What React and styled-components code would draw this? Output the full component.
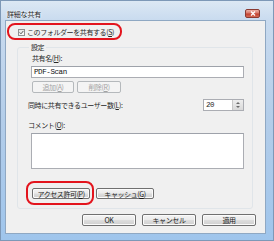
import React from "react";
import styled, { createGlobalStyle, css } from "styled-components";

const GlobalStyle = createGlobalStyle`
  html, body {
    margin: 0;
    padding: 0;
    background: #ffffff;
  }
  body {
    font-family: "Noto Sans CJK JP", "Noto Sans", sans-serif;
    font-size: 7px;
    letter-spacing: -0.4px;
    color: #262626;
  }
  * {
    box-sizing: border-box;
  }
`;

const Window = styled.div`
  width: 274px;
  height: 241px;
  display: flex;
  flex-direction: column;
  border: 1px solid #7d98b7;
  background: linear-gradient(180deg, #dce8f4 0%, #c9dbef 8%, #b3cde9 50%, #9fc5ec 100%);
`;

const TitleBar = styled.div`
  height: 19px;
  flex: none;
  display: flex;
  align-items: flex-end;
  justify-content: space-between;
  padding: 0 13px 2px 6px;
`;

const Title = styled.span`
  line-height: 8px;
  font-size: 7px;
  letter-spacing: -0.2px;
  color: #1e1e1e;
  text-shadow: 0 0 3px #ffffff, 0 0 2px #ffffff;
`;

const CloseButton = styled.div`
  width: 15px;
  height: 9px;
  border-radius: 2px;
  border: 1px solid #8a3a32;
  background: linear-gradient(180deg, #eeb1a6 0%, #d77566 45%, #c2402f 55%, #d46b55 100%);
  display: flex;
  align-items: center;
  justify-content: center;
`;

const Client = styled.div`
  flex: 1;
  margin: 0 7px 6px 4px;
  border: 1px solid #8fa8c3;
  background: #f0f0f0;
  display: flex;
  flex-direction: column;
  padding-top: 7px;
`;

const Highlight = styled.span`
  position: relative;
  display: inline-flex;
  &::after {
    content: "";
    position: absolute;
    top: ${(p) => -p.$t}px;
    right: ${(p) => -p.$r}px;
    bottom: ${(p) => -p.$b}px;
    left: ${(p) => -p.$l}px;
    border: 2.5px solid #e3141d;
    border-radius: 8px;
    pointer-events: none;
  }
`;

const CheckRow = styled.label`
  display: flex;
  align-items: center;
  gap: 2px;
  line-height: 8px;
  height: 8px;
`;

const CheckWrap = styled.div`
  margin-left: 12px;
  display: flex;
`;

const CheckBox = styled.span`
  width: 7px;
  height: 7px;
  border: 1px solid #8f8f8f;
  background: linear-gradient(135deg, #e4e4e4, #fbfbfb);
  display: flex;
  align-items: center;
  justify-content: center;
`;

const Group = styled.fieldset`
  margin: 7px 0 0 11px;
  width: 236px;
  padding: 0 8px 9px 8px;
  border: 1px solid #e0e5e9;
  border-radius: 3px;
  min-inline-size: 0;
`;

const Legend = styled.legend`
  margin-left: 3px;
  padding: 0 2px;
  line-height: 8px;
  height: 8px;
`;

const Label = styled.div`
  line-height: 8px;
  height: 8px;
  margin-top: ${(p) => p.$top || 0}px;
  margin-left: ${(p) => p.$indent || 0}px;
  white-space: nowrap;
`;

const TextBox = styled.div`
  margin-top: 4px;
  margin-left: 5px;
  height: 12px;
  background: #ffffff;
  border: 1px solid #abadb3;
  border-top-color: #9ea2aa;
  display: flex;
  align-items: center;
  padding-left: 2px;
  font-family: "Liberation Mono", "DejaVu Sans Mono", monospace;
  font-size: 7.5px;
  letter-spacing: -0.4px;
  color: #111;
`;

const ButtonRow = styled.div`
  display: flex;
  gap: ${(p) => p.$gap || 3}px;
  margin-top: ${(p) => p.$top || 0}px;
  margin-left: ${(p) => p.$indent || 0}px;
  justify-content: ${(p) => (p.$end ? "flex-end" : "flex-start")};
`;

const Button = styled.button`
  width: ${(p) => p.$w}px;
  height: ${(p) => p.$h || 12}px;
  padding: 0;
  font-family: inherit;
  font-size: 7px;
  letter-spacing: -0.4px;
  line-height: 8px;
  border-radius: 2px;
  display: flex;
  align-items: center;
  justify-content: center;
  white-space: nowrap;
  ${(p) =>
    p.disabled
      ? css`
          color: #a3a3a3;
          border: 1px solid #b5b9bc;
          background: #f4f4f4;
        `
      : css`
          color: #1a1a1a;
          border: 1px solid #707070;
          background: linear-gradient(180deg, #f3f3f3 0%, #ebebeb 48%, #dddddd 52%, #cfcfcf 100%);
          box-shadow: inset 0 0 0 1px #fbfbfb;
        `}
`;

const UsersRow = styled.div`
  display: flex;
  align-items: center;
  justify-content: space-between;
  margin-top: 6px;
  height: 12px;
`;

const Spin = styled.div`
  display: flex;
  height: 12px;
  width: 41px;
  border: 1px solid #abadb3;
  background: #ffffff;
`;

const SpinValue = styled.div`
  flex: 1;
  display: flex;
  align-items: center;
  padding-left: 2px;
  font-family: "Liberation Mono", "DejaVu Sans Mono", monospace;
  font-size: 7.5px;
  letter-spacing: -0.4px;
`;

const SpinArrows = styled.div`
  width: 11px;
  display: flex;
  flex-direction: column;
  align-items: center;
  justify-content: space-evenly;
  background: linear-gradient(180deg, #eeeeee, #d9d9d9);
  border-left: 1px solid #c8c8c8;
`;

const Arrow = styled.span`
  width: 0;
  height: 0;
  border-left: 2px solid transparent;
  border-right: 2px solid transparent;
  ${(p) =>
    p.$down
      ? css`border-top: 2px solid #6a6a6a;`
      : css`border-bottom: 2px solid #6a6a6a;`}
`;

const CommentBox = styled.div`
  margin-top: 4px;
  margin-left: 5px;
  height: 36px;
  background: #ffffff;
  border: 1px solid #abadb3;
  border-top-color: #9ea2aa;
`;

const Footer = styled.div`
  margin-top: 5px;
  padding-right: 9px;
`;

const Key = ({ k }) => (
  <>
    (<u>{k}</u>)
  </>
);

export default function App() {
  return (
    <>
      <GlobalStyle />
      <Window>
        <TitleBar>
          <Title>詳細な共有</Title>
          <CloseButton>
            <svg width="6" height="5" viewBox="0 0 6 5">
              <path d="M1 0.5 L5 4.5 M5 0.5 L1 4.5" stroke="#ffffff" strokeWidth="1.3" />
            </svg>
          </CloseButton>
        </TitleBar>
        <Client>
          <CheckWrap>
            <Highlight $t={5} $r={8} $b={4} $l={11}>
              <CheckRow>
                <CheckBox>
                  <svg width="5" height="5" viewBox="0 0 5 5">
                    <path d="M0.6 2.4 L2 3.8 L4.4 0.9" fill="none" stroke="#555" strokeWidth="1" />
                  </svg>
                </CheckBox>
                <span>
                  このフォルダーを共有する<Key k="S" />
                </span>
              </CheckRow>
            </Highlight>
          </CheckWrap>

          <Group>
            <Legend>設定</Legend>
            <Label $top={3} $indent={6}>
              共有名<Key k="H" />:
            </Label>
            <TextBox>PDF-Scan</TextBox>
            <ButtonRow $top={3} $indent={6} $gap={3}>
              <Button disabled $w={42}>
                追加<Key k="A" />
              </Button>
              <Button disabled $w={44}>
                削除<Key k="R" />
              </Button>
            </ButtonRow>
            <UsersRow>
              <Label $indent={2}>
                同時に共有できるユーザー数<Key k="L" />:
              </Label>
              <Spin>
                <SpinValue>20</SpinValue>
                <SpinArrows>
                  <Arrow />
                  <Arrow $down />
                </SpinArrows>
              </Spin>
            </UsersRow>
            <Label $top={10} $indent={2}>
              コメント<Key k="O" />:
            </Label>
            <CommentBox />
            <ButtonRow $top={19} $indent={6} $gap={6}>
              <Highlight $t={7} $r={4} $b={6} $l={6}>
                <Button $w={58} $h={11}>
                  アクセス許可<Key k="P" />
                </Button>
              </Highlight>
              <Button $w={58} $h={11}>
                キャッシュ<Key k="G" />
              </Button>
            </ButtonRow>
          </Group>

          <Footer>
            <ButtonRow $end $gap={6}>
              <Button $w={54}>OK</Button>
              <Button $w={54}>キャンセル</Button>
              <Button $w={54}>適用</Button>
            </ButtonRow>
          </Footer>
        </Client>
      </Window>
    </>
  );
}
